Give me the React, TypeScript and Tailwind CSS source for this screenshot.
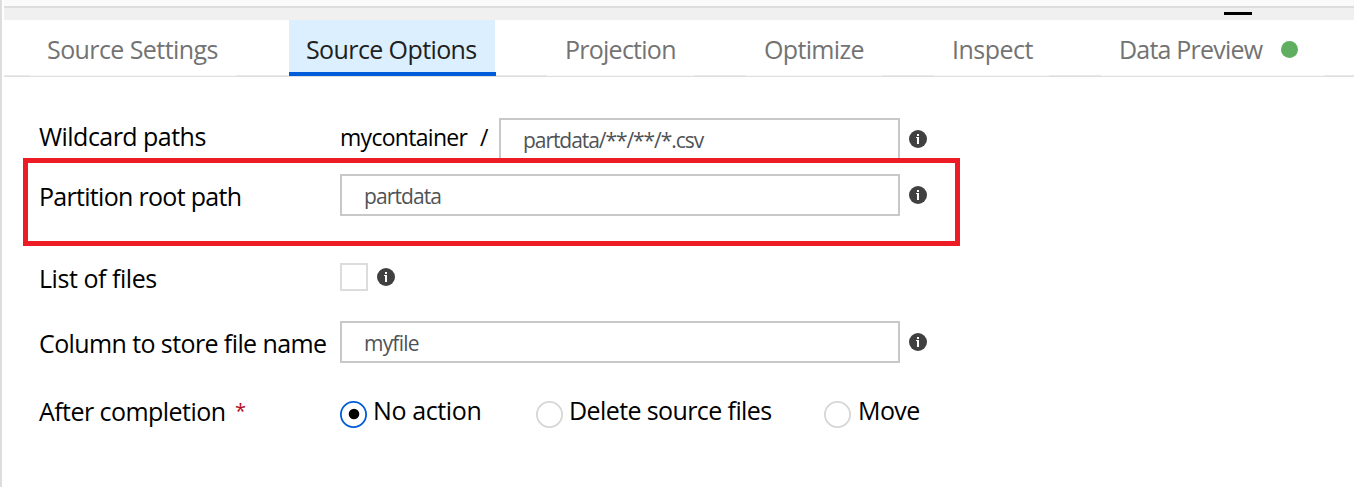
import type { ReactNode } from "react";

function InfoIcon({ className = "" }: { className?: string }) {
  return (
    <svg className={`h-[18px] w-[18px] shrink-0 ${className}`} viewBox="0 0 18 18">
      <circle cx="9" cy="9" r="9" fill="#404040" />
      <g fill="#fff" shapeRendering="crispEdges">
        <rect x="8" y="4" width="2" height="2" />
        <path d="M7 7h3v7H8V8H7z" />
      </g>
    </svg>
  );
}

function Tab({ className, children }: { className: string; children: ReactNode }) {
  return (
    <div className={`flex h-[56px] shrink-0 items-center whitespace-nowrap border-b border-[#f8f8f8] pl-[18px] pt-[3px] ${className}`}>
      {children}
    </div>
  );
}

function Radio({ checked = false, className = "" }: { checked?: boolean; className?: string }) {
  return (
    <svg className={`h-7 w-7 shrink-0 ${className}`} viewBox="0 0 28 28">
      <circle cx="13.5" cy="13.5" r="12.6" fill="#fff" stroke={checked ? "#015cda" : "#d6d6d6"} strokeWidth="1.8" />
      {checked && <circle cx="14" cy="13" r="5.3" fill="#000" />}
    </svg>
  );
}

const field = "flex h-[42px] shrink-0 items-center border-2 border-[#c8c8c8] bg-white pl-[22px] pt-[2px] text-[21px] leading-[30px] text-[#505356]";
const label = "w-[301px] shrink-0";

export default function App() {
  return (
    <div className="h-[487px] w-full overflow-hidden border-l-2 border-[#dddddd] bg-white pl-[2px] font-['Open_Sans','Noto_Sans',sans-serif] text-[25px] leading-[34px] text-black">
      <div className="h-[6px] bg-[#fafafa]" />
      <div className="h-[14px] border-t-2 border-[#dddddd] bg-[#f0f0f0] pt-[4px]">
        <div className="ml-[1220px] h-[3px] w-[28px] bg-black" />
      </div>
      <nav className="flex h-[57px] border-b border-[#dfdfdf] text-[#737373]">
        <div className="h-[56px] w-[26px] border-b border-[#e9e9e9]" />
        <Tab className="w-[206px] tracking-[-0.58px]"><span className="-ml-[1px]">Source Settings</span></Tab>
        <div className="h-[56px] w-[53px] border-b border-[#e9e9e9]" />
        <div className="flex h-[56px] w-[207px] shrink-0 flex-col">
          <div className="flex h-[52px] w-[206px] items-center whitespace-nowrap bg-[#dceffe] pl-[17px] pt-[6px] tracking-[-0.6px] text-[#202020]">
            <span>Source Options</span>
          </div>
          <div className="h-[4px] bg-[#015cda]" />
        </div>
        <div className="h-[56px] w-[51px] border-b border-[#e9e9e9]" />
        <Tab className="w-[147px] tracking-[-0.75px]"><span>Projection</span></Tab>
        <div className="h-[56px] w-[52px] border-b border-[#e9e9e9]" />
        <Tab className="w-[136px] tracking-[-0.65px]"><span>Optimize</span></Tab>
        <div className="h-[56px] w-[52px] border-b border-[#e9e9e9]" />
        <Tab className="w-[115px] tracking-[-0.5px]"><span>Inspect</span></Tab>
        <div className="h-[56px] w-[52px] border-b border-[#e9e9e9]" />
        <Tab className="w-[223px] tracking-[-0.8px]">
          <span className="w-[162px]">Data Preview</span>
          <span className="mt-[1px] h-[17px] w-[17px] rounded-full bg-[#60ae60]" />
        </Tab>
        <div className="h-[56px] flex-1 border-b border-[#e9e9e9]" />
      </nav>

      <form className="whitespace-nowrap">
        <div className="flex h-[81px] overflow-hidden pl-[35px] pt-[41px]">
          <div className={`${label} pt-[1px] tracking-[-0.53px]`}><span>Wildcard paths</span></div>
          <div className="w-[140px] shrink-0 pt-[2px] text-[23px] tracking-[-0.7px]"><span>mycontainer</span></div>
          <div className="w-[19px] shrink-0 pt-[2px] text-[23px]"><span>/</span></div>
          <div className={`${field} w-[401px] tracking-[-1.06px]`}><span>partdata/**/**/*.csv</span></div>
          <InfoIcon className="mt-[12px] ml-[9px]" />
        </div>
        <div className="ml-[19px] flex h-[88px] w-[937px] border-[5px] border-[#ed1c24] bg-white pl-[11px] pt-[11px]">
          <div className={`${label} pt-[5px] tracking-[-0.7px]`}><span>Partition root path</span></div>
          <div className={`${field} w-[560px] tracking-[-0.9px]`}><span>partdata</span></div>
          <InfoIcon className="mt-[12px] ml-[9px]" />
        </div>
        <div className="flex h-[75px] pl-[35px] pt-[15px]">
          <div className={`${label} tracking-[-0.45px]`}><span>List of files</span></div>
          <div className="mt-[2px] h-[28px] w-[28px] border-2 border-[#dcdcdc]" />
          <InfoIcon className="mt-[7px] ml-[9px]" />
        </div>
        <div className="flex h-[72px] pl-[35px]">
          <div className={`${label} pt-[5px] tracking-[-0.6px]`}><span>Column to store file name</span></div>
          <div className={`${field} w-[560px] tracking-[-0.8px]`}><span>myfile</span></div>
          <InfoIcon className="mt-[12px] ml-[9px]" />
        </div>
        <div className="flex pl-[35px]">
          <div className="flex w-[301px] shrink-0 pt-[1px]">
            <span className="w-[196px] shrink-0 tracking-[-0.55px]">After completion</span>
            <span className="text-[20px] text-[#b10e1c]">*</span>
          </div>
          <Radio checked className="mt-[8px]" />
          <div className="ml-[5px] w-[163px] shrink-0 tracking-[-0.38px]"><span>No action</span></div>
          <Radio className="mt-[8px]" />
          <div className="ml-[5px] w-[255px] shrink-0 tracking-[-0.6px]"><span>Delete source files</span></div>
          <Radio className="mt-[8px]" />
          <div className="ml-[6px] tracking-[-0.6px]"><span>Move</span></div>
        </div>
      </form>
    </div>
  );
}
